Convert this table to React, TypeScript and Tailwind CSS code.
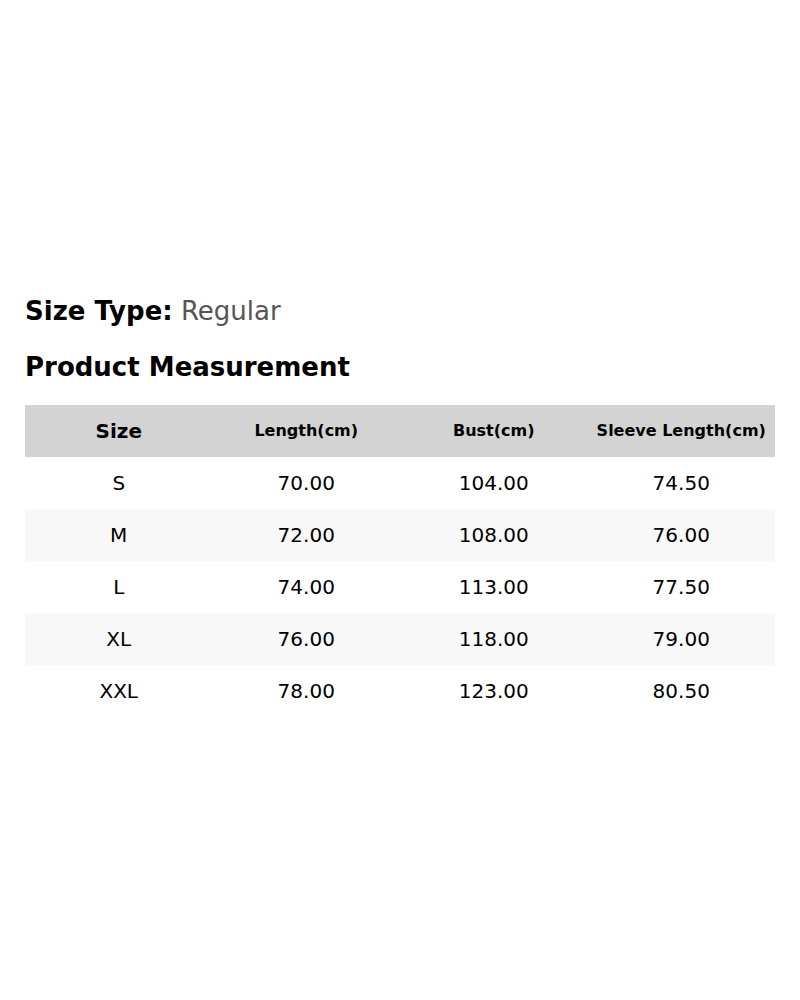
const rows = [
  { size: 'S', length: '70.00', bust: '104.00', sleeve: '74.50' },
  { size: 'M', length: '72.00', bust: '108.00', sleeve: '76.00' },
  { size: 'L', length: '74.00', bust: '113.00', sleeve: '77.50' },
  { size: 'XL', length: '76.00', bust: '118.00', sleeve: '79.00' },
  { size: 'XXL', length: '78.00', bust: '123.00', sleeve: '80.50' },
];

export default function App() {
  return (
    <div className="min-h-screen bg-white flex flex-col justify-center px-[25px] pt-[12px] text-black font-['DejaVu_Sans',sans-serif]">
      {/* Size type */}
      <p className="text-[26px] leading-[32px]">
        <span className="font-bold">Size Type:</span>{' '}
        <span className="text-[#555]">Regular</span>
      </p>

      <h2 className="mt-[24px] text-[26px] leading-[32px] font-bold">Product Measurement</h2>

      {/* Table */}
      <table className="mt-[22px] w-full table-fixed border-collapse">
        <thead>
          <tr className="bg-[#d3d3d3] h-[52px]">
            <th className="text-[20px] font-bold">Size</th>
            <th className="text-[16px] font-bold">Length(cm)</th>
            <th className="text-[16px] font-bold">Bust(cm)</th>
            <th className="text-[16px] font-bold">Sleeve Length(cm)</th>
          </tr>
        </thead>
        <tbody>
          {rows.map((r, i) => (
            <tr key={r.size} className={`h-[52px] text-[20px] text-center ${i % 2 === 1 ? 'bg-[#f8f8f8]' : 'bg-white'}`}>
              <td>{r.size}</td>
              <td>{r.length}</td>
              <td>{r.bust}</td>
              <td>{r.sleeve}</td>
            </tr>
          ))}
        </tbody>
      </table>
    </div>
  );
}
